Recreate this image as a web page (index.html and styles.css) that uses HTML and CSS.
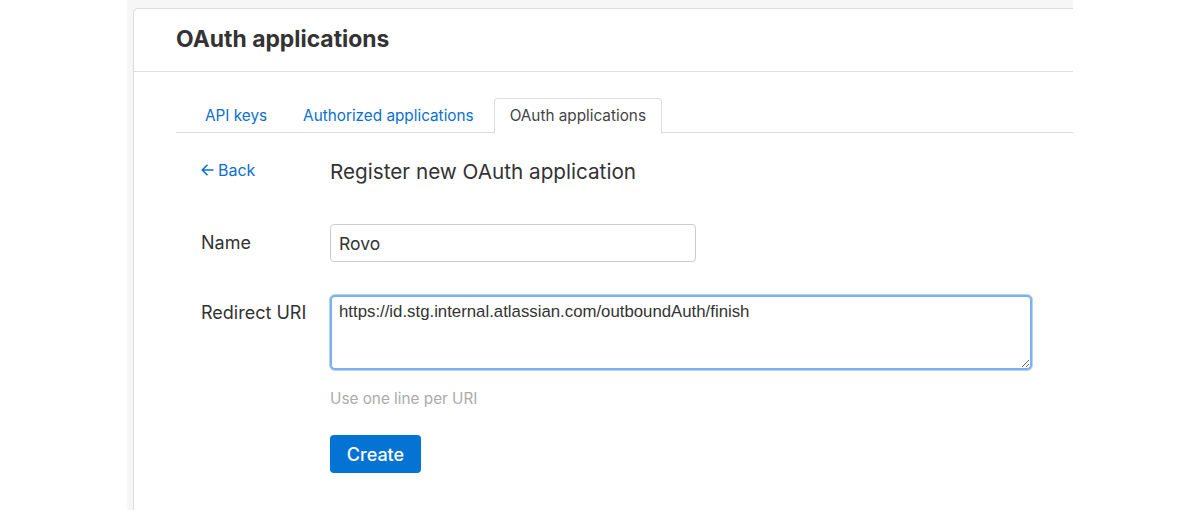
FILE: index.html
```html
<!DOCTYPE html>
<html lang="en">
<head>
<meta charset="utf-8">
<title>OAuth applications</title>
<link rel="stylesheet" href="styles.css">
</head>
<body>
<div class="page">
  <div class="canvas">
    <div class="card">
      <header class="card-header">
        <h1 class="card-title">OAuth applications</h1>
      </header>
      <div class="card-body">
        <nav class="tabs">
          <a class="tab" href="#">API keys</a>
          <a class="tab" href="#">Authorized applications</a>
          <a class="tab tab-active" href="#">OAuth applications</a>
        </nav>
        <form class="form">
          <div class="form-row row-title">
            <a class="back" href="#">
              <svg class="back-icon" width="13" height="12" viewBox="0 0 13 12" aria-hidden="true"><path d="M12 6H1.5M6 1.2L1.2 6 6 10.8" fill="none" stroke="currentColor" stroke-width="1.6" stroke-linecap="round" stroke-linejoin="round"/></svg>
              <span>Back</span>
            </a>
            <h2 class="form-title">Register new OAuth application</h2>
          </div>
          <div class="form-row row-name">
            <label class="label" for="name">Name</label>
            <input class="input" id="name" type="text" value="Rovo">
          </div>
          <div class="form-row row-uri">
            <label class="label label-top" for="uri">Redirect URI</label>
            <div class="field">
              <textarea class="textarea" id="uri">https://id.stg.internal.atlassian.com/outboundAuth/finish</textarea>
              <p class="help">Use one line per URI</p>
              <button class="btn" type="button">Create</button>
            </div>
          </div>
        </form>
      </div>
    </div>
  </div>
</div>
</body>
</html>
```

FILE: styles.css
```css
* { box-sizing: border-box; }

html, body {
  margin: 0;
  padding: 0;
  background: #ffffff;
  height: 100%;
}

body {
  font-family: Inter, "Noto Sans", "Liberation Sans", sans-serif;
  color: #333333;
}

.page {
  height: 510px;
  padding-left: 127px;
  overflow: hidden;
}

.canvas {
  width: 946px;
  height: 510px;
  background: #f6f6f6;
  padding: 8px 0 0 6px;
  overflow: hidden;
}

.card {
  width: 1000px;
  height: 520px;
  background: #ffffff;
  border: 1px solid #dcdcdc;
  border-radius: 5px 0 0 0;
}

.card-header {
  height: 63px;
  border-bottom: 1px solid #e0e0e0;
  padding: 0 0 2px 42px;
  display: flex;
  align-items: center;
}

.card-title {
  margin: 0;
  font-size: 22.9px;
  font-weight: 700;
  color: #333333;
}

.card-body {
  padding: 26px 0 0 42px;
}

.tabs {
  display: flex;
  gap: 4px;
  padding-left: 13px;
  border-bottom: 1px solid #dddddd;
  height: 35px;
}

.tab {
  display: block;
  height: 35px;
  padding: 7px 15px 0;
  font-size: 15.3px;
  line-height: 20px;
  color: #0b6fcf;
  text-decoration: none;
  border: 1px solid transparent;
  border-bottom: none;
  border-radius: 4px 4px 0 0;
}

.tab-active {
  color: #444444;
  border-color: #dddddd;
  background: #ffffff;
  height: 36px;
  position: relative;
  z-index: 1;
}

.form {
  padding-left: 25px;
}

.form-row {
  display: grid;
  grid-template-columns: 129px 1fr;
}

.row-title {
  margin-top: 24px;
  height: 30px;
  align-items: center;
}

.back {
  display: flex;
  align-items: center;
  gap: 4px;
  color: #0b6fcf;
  text-decoration: none;
  font-size: 16px;
  line-height: 20px;
  margin-top: -4px;
}

.back-icon { display: block; }

.form-title {
  margin: 0;
  font-size: 20.7px;
  font-weight: 400;
  line-height: 30px;
  color: #333333;
}

.row-name {
  margin-top: 37px;
  align-items: center;
}

.label {
  font-size: 18px;
  line-height: 22px;
  color: #333333;
}

.label-top {
  padding-top: 7px;
}

.input {
  width: 366px;
  height: 38px;
  border: 1px solid #cccccc;
  border-radius: 4px;
  padding: 0 8px;
  font-family: Inter, "Noto Sans", "Liberation Sans", sans-serif;
  font-size: 17.5px;
  color: #333333;
  outline: none;
}

.row-uri {
  margin-top: 33px;
}

.field {
  display: flex;
  flex-direction: column;
  align-items: flex-start;
}

.textarea {
  width: 702px;
  height: 75px;
  border: 2px solid #7cb0ec;
  box-shadow: 0 0 0 1px #b4d3f5;
  border-radius: 5px;
  padding: 5px 7px;
  font-family: "Liberation Sans", Arial, sans-serif;
  font-size: 16.8px;
  line-height: 20px;
  color: #333333;
  outline: none;
  resize: both;
}

.help {
  margin: 19px 0 0;
  font-size: 15.3px;
  line-height: 20px;
  color: #ababab;
}

.btn {
  margin-top: 26px;
  width: 91px;
  height: 38px;
  border: none;
  border-radius: 4px;
  background: #0573d3;
  color: #ffffff;
  font-family: Inter, "Noto Sans", "Liberation Sans", sans-serif;
  font-size: 18px;
  font-weight: 500;
}
```
